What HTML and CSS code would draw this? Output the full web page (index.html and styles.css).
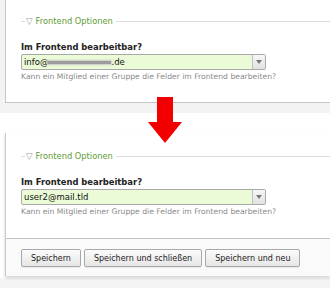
FILE: index.html
```html
<!DOCTYPE html>
<html>
<head>
<meta charset="utf-8">
<link rel="stylesheet" href="styles.css">
</head>
<body>
<div class="shot shot-top">
  <div class="panel panel-top">
    <div class="legend"><span class="lline short"></span><span class="tri">▽</span><span class="ltext">Frontend Optionen</span><span class="lline long"></span></div>
    <div class="label">Im Frontend bearbeitbar?</div>
    <div class="select"><span class="value">info@<span class="redact"></span>.de</span><span class="arrow"><svg width="6" height="4" viewBox="0 0 6 4"><path d="M0 0H6L3 4Z" fill="#777"/></svg></span></div>
    <div class="help">Kann ein Mitglied einer Gruppe die Felder im Frontend bearbeiten?</div>
  </div>
</div>
<div class="shot shot-bottom">
  <div class="panel panel-bottom">
    <div class="body">
      <div class="legend"><span class="lline short"></span><span class="tri">▽</span><span class="ltext">Frontend Optionen</span><span class="lline long"></span></div>
      <div class="label">Im Frontend bearbeitbar?</div>
      <div class="select"><span class="value">user2@mail.tld</span><span class="arrow"><svg width="6" height="4" viewBox="0 0 6 4"><path d="M0 0H6L3 4Z" fill="#777"/></svg></span></div>
      <div class="help">Kann ein Mitglied einer Gruppe die Felder im Frontend bearbeiten?</div>
    </div>
    <div class="footer">
      <button class="btn">Speichern</button>
      <button class="btn">Speichern und schließen</button>
      <button class="btn">Speichern und neu</button>
    </div>
  </div>
</div>
<svg class="bigarrow" width="34" height="46" viewBox="0 0 34 46"><path d="M9 0H25V25H34L17 46L0 25H9Z" fill="#f20000"/></svg>
</body>
</html>
```
FILE: styles.css
```css
html, body {
  margin: 0;
  padding: 0;
  background: #ffffff;
}
body {
  width: 330px;
  height: 288px;
  overflow: hidden;
  position: relative;
  font-family: "DejaVu Sans", Verdana, sans-serif;
  color: #222;
}
.shot {
  overflow: hidden;
}
.shot-top {
  height: 113px;
  background: #f3f3f3;
}
.panel {
  margin-left: 5px;
  background: #fff;
  border-left: 1px solid #c8c8c8;
}
.panel-top {
  height: 103px;
  border-bottom: 1px solid #c4c4c4;
  padding: 16px 0 0 15px;
  box-sizing: border-box;
}
.shot-bottom {
  height: 175px;
  padding-top: 20px;
  box-sizing: border-box;
  background: linear-gradient(#fff 0, #fff 165px, #f4f4f4 165px);
}
.panel-bottom {
  box-shadow: 0 2px 3px rgba(0,0,0,0.18);
}
.body {
  padding: 18px 0 21px 15px;
}
.legend {
  display: flex;
  align-items: center;
  height: 10px;
  line-height: 10px;
}
.lline {
  height: 1px;
  background: #dcdcdc;
}
.lline.short { width: 4px; }
.lline.long { flex: 1; margin-left: 3px; }
.tri {
  color: #999;
  font-size: 8.5px;
  margin: 0 3px 0 1px;
}
.ltext {
  color: #5e9b34;
  font-size: 8.3px;
}
.label {
  margin-top: 16px;
  font-weight: bold;
  font-size: 8.4px;
  line-height: 10px;
  color: #222;
}
.select {
  margin-top: 2px;
  width: 245px;
  height: 16px;
  box-sizing: border-box;
  border: 1px solid #a9a9a9;
  border-radius: 2px;
  background: #ebfbd8;
  display: flex;
  align-items: center;
}
.value {
  flex: 1;
  padding-left: 2px;
  font-size: 8.5px;
  color: #111;
  display: flex;
  align-items: center;
}
.redact {
  display: inline-block;
  width: 63px;
  height: 3px;
  background: #9c9c9c;
  box-shadow: 0 0 2px 1px #c9c9c9;
}
.arrow {
  width: 12px;
  height: 100%;
  border-left: 1px solid #c0c0c0;
  background: linear-gradient(#f6f6f6, #e2e2e2);
  display: flex;
  align-items: center;
  justify-content: center;
}
.help {
  margin-top: 2px;
  font-size: 7.65px;
  line-height: 10px;
  color: #8a8a8a;
}
.footer {
  border-top: 1px solid #c4c4c4;
  background: #fafafa;
  padding: 10px 0 9px 15px;
  display: flex;
  gap: 3px;
}
.btn {
  height: 18px;
  padding: 0 9px;
  font-family: "DejaVu Sans", Verdana, sans-serif;
  font-size: 8px;
  color: #222;
  border: 1px solid #a8a8a8;
  border-radius: 2px;
  background: linear-gradient(#fbfbfb, #e6e6e6);
  box-shadow: 0 1px 0 rgba(0,0,0,0.06);
}
.bigarrow {
  position: absolute;
  left: 148px;
  top: 97px;
}
```
